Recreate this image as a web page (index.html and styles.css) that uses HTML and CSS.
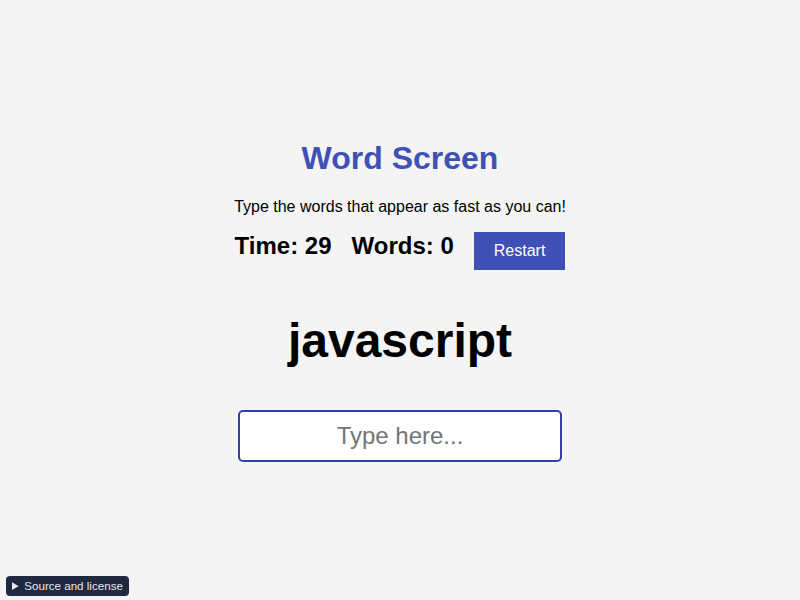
FILE: index.html
```html
<!DOCTYPE html>
<html lang="en">
<head>
    <meta charset="UTF-8">
    <meta name="viewport" content="width=device-width, initial-scale=1.0">
    <title>Word Screen</title>
    <link rel="stylesheet" href="styles.css">
</head>
<body>

<div class="container">
    <h1>Word Screen</h1>
    <p class="subtitle">Type the words that appear as fast as you can!</p>

    <!-- Stats row -->
    <div class="stats">
        <span class="stat">Time: <span id="time">29</span></span>
        <span class="stat">Words: <span id="score">0</span></span>
        <button class="restart-button" id="restart">Restart</button>
    </div>

    <h2 class="word" id="word">javascript</h2>

    <input type="text" id="typeInput" class="type-input" placeholder="Type here...">
</div>

<details class="source-badge">
    <summary>Source and license</summary>
</details>

</body>
</html>
```

FILE: styles.css
```css
/* Global Styles */
body {
    font-family: 'Liberation Sans', Arial, sans-serif;
    background-color: #f4f4f4;
    margin: 0;
    padding: 0;
    height: 100vh;
    color: #000000;
}

.container {
    text-align: center;
    padding-top: 140px;
}

h1 {
    color: #3f51b5;
    font-size: 32px;
    margin: 0 0 21px 0;
}

.subtitle {
    font-size: 16px;
    margin: 0 0 16px 0;
}

.stats {
    display: flex;
    justify-content: center;
    align-items: flex-start;
    gap: 20px;
}

.stat {
    font-size: 24px;
    font-weight: bold;
}

.restart-button {
    background-color: #3f51b5;
    color: white;
    font-family: inherit;
    font-size: 16px;
    padding: 10px 20px;
    border: none;
    cursor: pointer;
}

.restart-button:hover {
    background-color: #303f9f;
}

.word {
    font-size: 48px;
    margin: 43px 0 42px 0;
}

.type-input {
    width: 300px;
    padding: 10px;
    font-family: inherit;
    font-size: 24px;
    text-align: center;
    border: 2px solid #3143a8;
    border-radius: 5px;
    background-color: #ffffff;
    outline: none;
}

.type-input::placeholder {
    color: #757575;
}

/* Source badge in the corner */
.source-badge {
    position: fixed;
    left: 6px;
    bottom: 4px;
    background-color: #1f2a40;
    color: #e5e7eb;
    border-radius: 4px;
    font-size: 11.6px;
    line-height: 14px;
    padding: 3px 6px 3px 6px;
}

.source-badge summary {
    cursor: pointer;
}
```
